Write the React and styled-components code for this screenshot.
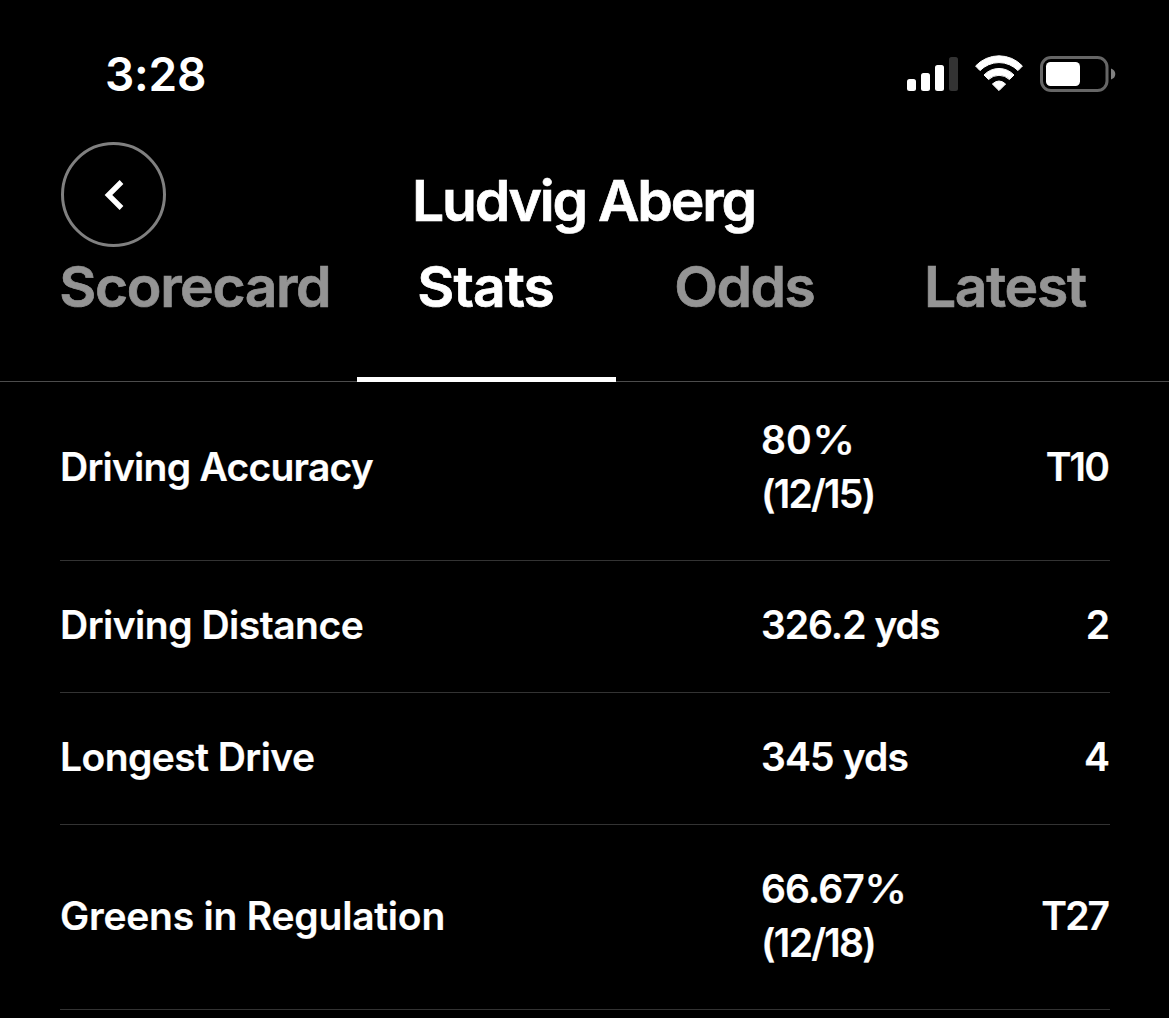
import React from 'react';
import styled, { createGlobalStyle } from 'styled-components';

const GlobalStyle = createGlobalStyle`
	body {
		margin: 0;
		background: #000;
		color: #fff;
		font-family: Inter, 'Liberation Sans', sans-serif;
	}
`;

const Screen = styled.div`
	width: 1169px;
	height: 1018px;
	overflow: hidden;
	background: #000;
`;

const StatusBar = styled.div`
	display: flex;
	justify-content: space-between;
	align-items: center;
	box-sizing: border-box;
	height: 142px;
	padding: 6px 53px 0 105px;
`;

const Clock = styled.span`
	font-size: 46px;
	font-weight: 600;
	line-height: 62px;
	letter-spacing: -0.2px;
`;

const StatusIcons = styled.svg`
	display: block;
	width: 210px;
	height: 40px;
`;

const Header = styled.header`
	display: grid;
	grid-template-columns: 107px 1fr 107px;
	height: 106px;
	padding: 0 60px;
`;

const BackButton = styled.button`
	display: flex;
	align-items: center;
	justify-content: center;
	box-sizing: border-box;
	width: 105px;
	height: 105px;
	margin: 0.4px 0 0 1.4px;
	padding: 0;
	border: 3px solid #808080;
	border-radius: 50%;
	background: none;
	color: #fff;
`;

const PlayerName = styled.h1`
	margin: 24px 0 0;
	font-size: 57px;
	font-weight: 600;
	line-height: 70px;
	text-align: center;
	text-indent: -2.2px;
	white-space: nowrap;
	letter-spacing: -2.2px;
	-webkit-text-stroke: 0.7px currentColor;
`;

const Tabs = styled.nav`
	display: grid;
	grid-template-columns: 322px 259px 259px 262px;
	box-sizing: border-box;
	height: 134px;
	padding-left: 35px;
	border-bottom: 1px solid #4c4c4c;
`;

const Tab = styled.a`
	box-sizing: border-box;
	height: 134px;
	padding-top: 4px;
	border-bottom: 5px solid ${props => (props.$active ? '#fff' : 'transparent')};
	color: ${props => (props.$active ? '#fff' : '#949494')};
	font-size: 57px;
	font-weight: 600;
	line-height: 70px;
	text-align: center;
	text-indent: ${props => props.$spacing - 1}px;
	white-space: nowrap;
	letter-spacing: ${props => props.$spacing}px;
	-webkit-text-stroke: 0.7px currentColor;
`;

const StatList = styled.div`
	margin: 0 59px 0 60px;
`;

const StatRow = styled.div`
	display: grid;
	grid-template-columns: 701px 1fr auto;
	align-items: center;
	box-sizing: border-box;
	height: ${props => props.$height}px;
	padding: ${props => props.$top}px 0 39px;
	border-bottom: 1px solid #333;
	font-size: 39px;
	font-weight: 600;
	line-height: 54px;
`;

const Cell = styled.div`
	white-space: nowrap;
	letter-spacing: ${props => props.$spacing || 0}px;
	-webkit-text-stroke: 0.2px currentColor;
`;

const Percent = styled.span`
	display: inline-block;
	font-weight: 500;
	transform: scaleX(1.12);
	transform-origin: left;
`;

/* cancels the spacing after the last glyph so the ranks stay flush right */
const Rank = styled(Cell)`
	margin-right: ${props => -(props.$spacing || 0)}px;
`;

const tabs = [
	{ name: 'Scorecard', spacing: -1.4 },
	{ name: 'Stats', spacing: -0.9, active: true },
	{ name: 'Odds', spacing: -1.6 },
	{ name: 'Latest', spacing: -1.3 }
];

const stats = [
	{
		label: { text: 'Driving Accuracy', spacing: -0.75 },
		value: [{ text: '80', percent: true }, { text: '(12/15)', spacing: -1.75 }],
		rank: { text: 'T10', spacing: -1.8 },
		height: 179,
		top: 31
	},
	{
		label: { text: 'Driving Distance', spacing: -0.5 },
		value: [{ text: '326.2 yds', spacing: -1 }],
		rank: { text: '2' },
		height: 132,
		top: 36
	},
	{
		label: { text: 'Longest Drive', spacing: -0.55 },
		value: [{ text: '345 yds', spacing: -0.85 }],
		rank: { text: '4' },
		height: 132,
		top: 36
	},
	{
		label: { text: 'Greens in Regulation', spacing: -0.22 },
		value: [{ text: '66.67', spacing: -0.9, percent: true }, { text: '(12/18)', spacing: -1.7 }],
		rank: { text: 'T27', spacing: -1.9 },
		height: 185,
		top: 37
	}
];

const StatusGlyphs = () => (
	<StatusIcons viewBox="906 54 210 40">
		<rect x="907" y="79" width="9" height="12" rx="2.5" fill="#fff" />
		<rect x="921" y="73" width="9" height="18" rx="2.5" fill="#fff" />
		<rect x="935" y="65" width="9" height="26" rx="2.5" fill="#fff" />
		<rect x="949" y="57" width="9" height="34" rx="2.5" fill="#333" />
		<g fill="#fff" stroke="#fff" strokeWidth="1" strokeLinejoin="round">
			<path d="M975.6 66a32 32 0 0 1 46.8 0l-4.4 4.6a26.5 26.5 0 0 0-38 0z" />
			<path d="M984 75a20.5 20.5 0 0 1 30 0l-4.6 4.5a15 15 0 0 0-20.8 0z" />
			<path d="M999 90.6L992.4 84Q999 78 1005.6 84z" />
		</g>
		<rect x="1041.5" y="57.5" width="65.5" height="33" rx="9.5" fill="none" stroke="#666" strokeWidth="3" />
		<rect x="1046" y="62" width="34" height="24" rx="4.5" fill="#fff" />
		<path d="M1111 68.5q4.3 1.5 4.3 5.5t-4.3 5.5z" fill="#808080" />
	</StatusIcons>
);

const App = () => (
	<Screen>
		<GlobalStyle />
		<StatusBar>
			<Clock>3:28</Clock>
			<StatusGlyphs />
		</StatusBar>
		<Header>
			<BackButton>
				<svg width="20" height="32" viewBox="0 0 20 32">
					<path d="M17.5 3L4.4 16l13.1 13" fill="none" stroke="currentColor" strokeWidth="5.3" />
				</svg>
			</BackButton>
			<PlayerName>Ludvig Aberg</PlayerName>
		</Header>
		<Tabs>
			{tabs.map(tab => (
				<Tab key={tab.name} $active={tab.active} $spacing={tab.spacing}>
					{tab.name}
				</Tab>
			))}
		</Tabs>
		<StatList>
			{stats.map(({ label, value, rank, height, top }) => (
				<StatRow key={label.text} $height={height} $top={top}>
					<Cell $spacing={label.spacing}>{label.text}</Cell>
					<div>
						{value.map(line => (
							<Cell key={line.text} $spacing={line.spacing}>
								{line.text}
								{line.percent ? <Percent>%</Percent> : null}
							</Cell>
						))}
					</div>
					<Rank $spacing={rank.spacing}>{rank.text}</Rank>
				</StatRow>
			))}
		</StatList>
	</Screen>
);

export default App;
